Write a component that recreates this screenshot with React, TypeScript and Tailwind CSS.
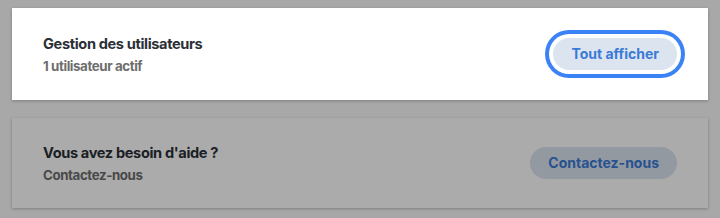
import React from 'react'

type CardProps = {
  title: string
  subtitle: string
  action: string
  focused?: boolean
  className?: string
}

const Card = ({ title, subtitle, action, focused, className }: CardProps) => {
  return (
    <div
      className={`flex items-center justify-between bg-white px-[31px] shadow-[0_1px_3px_rgba(0,0,0,0.25)] ${className ?? ''}`}
    >
      <div className="flex flex-col">
        <span className="text-[14.6px] leading-6 font-bold tracking-[-0.025em] text-[#2b3036]">{title}</span>
        <span className="text-[13.3px] leading-5 font-bold tracking-[-0.03em] text-[#6e6e6e]">{subtitle}</span>
      </div>
      <button
        className={`h-8 rounded-full bg-[#dce4f0] px-[18px] text-sm font-bold text-[#3a7bd5] ${
          focused ? 'ring-4 ring-[#3b82f6] ring-offset-4 ring-offset-white' : ''
        }`}
      >
        {action}
      </button>
    </div>
  )
}

export default function App() {
  return (
    <div
      className="relative flex h-[218px] w-[720px] flex-col bg-[#fbfbfb] px-3 pt-2"
      style={{ fontFamily: 'Inter, "Noto Sans", sans-serif' }}
    >
      <Card
        title="Gestion des utilisateurs"
        subtitle="1 utilisateur actif"
        action="Tout afficher"
        focused
        className="relative z-10 h-[92px]"
      />
      <Card
        title="Vous avez besoin d'aide ?"
        subtitle="Contactez-nous"
        action="Contactez-nous"
        className="mt-[18px] h-[90px]"
      />
      {/* dimming overlay, the focused card sits above it */}
      <div className="absolute inset-0 bg-black/[0.33]" />
    </div>
  )
}
